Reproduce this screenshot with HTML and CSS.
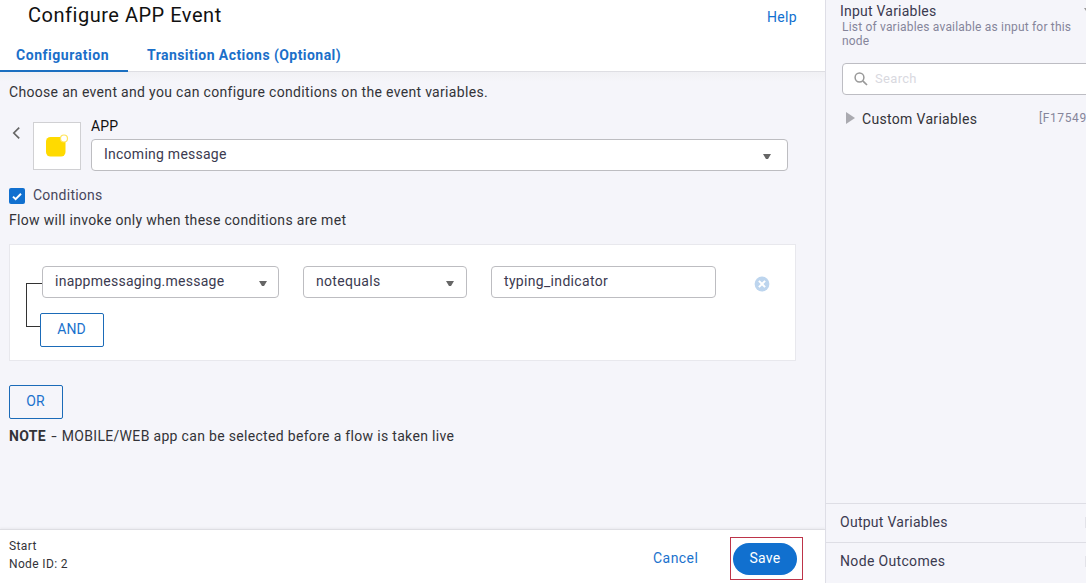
FILE: index.html
```html
<!DOCTYPE html>
<html lang="en">
<head>
<meta charset="utf-8">
<title>Configure APP Event</title>
<link rel="stylesheet" href="styles.css">
</head>
<body>
<div class="layout">
  <main class="main">
    <header class="header">
      <div class="title-row"><h1 class="title">Configure APP Event</h1><a class="help">Help</a></div>
      <nav class="tabs"><a class="tab tab-active">Configuration</a><a class="tab">Transition Actions (Optional)</a></nav>
    </header>
    <section class="content">
      <p class="intro">Choose an event and you can configure conditions on the event variables.</p>
      <div class="event">
        <svg class="back" width="10" height="14" viewBox="0 0 10 14"><path d="M8.2 1.6 2.8 7l5.4 5.4" fill="none" stroke="#666" stroke-width="1.7"/></svg>
        <div class="app-icon"><svg width="46" height="46" viewBox="0 0 46 46"><rect x="12" y="14" width="19.5" height="19.5" rx="4.5" fill="#ffda00"/><circle cx="30" cy="15.5" r="3.5" fill="#fff" stroke="#ffe45a" stroke-width="1.2"/></svg></div>
        <div class="event-field">
          <div class="label">APP</div>
          <div class="control"><span class="incoming">Incoming message</span><svg class="caret" width="8" height="6"><path d="M0 0h8L5 5H3z" fill="#666"/></svg></div>
        </div>
      </div>
      <div class="check-row"><span class="checkbox"><svg width="16" height="16" viewBox="0 0 16 16"><path d="m4 8.6 2.6 2.5L12 5.7" fill="none" stroke="#fff" stroke-width="2"/></svg></span><span class="conditions-label">Conditions</span></div>
      <p class="flow-text">Flow will invoke only when these conditions are met</p>
      <div class="conditions">
        <div class="link-line"></div>
        <div class="rules">
          <div class="rule">
            <div class="control variable"><span class="variable-text">inappmessaging.message</span><svg class="caret" width="8" height="6"><path d="M0 0h8L5 5H3z" fill="#666"/></svg></div>
            <div class="control operator"><span class="operator-text">notequals</span><svg class="caret" width="8" height="6"><path d="M0 0h8L5 5H3z" fill="#666"/></svg></div>
            <div class="control value"><span class="value-text">typing_indicator</span></div>
            <svg class="remove" width="16" height="16" viewBox="0 0 16 16"><circle cx="8" cy="8" r="7.4" fill="#bdd5ee"/><path d="m4.9 4.9 6.2 6.2m0-6.2-6.2 6.2" stroke="#fff" stroke-width="2"/></svg>
          </div>
          <button class="outline and">AND</button>
        </div>
      </div>
      <button class="outline or">OR</button>
      <p class="note"><b>NOTE</b> <span class="dash">-</span> MOBILE/WEB app can be selected before a flow is taken live</p>
    </section>
    <footer class="footer">
      <div class="node-info"><div>Start</div><div>Node ID: 2</div></div>
      <a class="cancel">Cancel</a>
      <div class="save-frame"><button class="save">Save</button></div>
    </footer>
  </main>
  <aside class="side">
    <div class="side-top">
      <h2 class="side-title input-title">Input Variables</h2>
      <p class="side-desc">List of variables available as input for this node</p>
      <div class="search"><svg width="14" height="14" viewBox="0 0 14 14"><circle cx="5.5" cy="5.5" r="4.4" fill="none" stroke="#999" stroke-width="1.5"/><path d="m8.8 8.8 4.2 4.2" stroke="#999" stroke-width="1.7"/></svg><span>Search</span></div>
      <div class="tree"><svg width="9" height="12"><path d="M0 0 9 6 0 12z" fill="#aaaab0"/></svg><span class="custom">Custom Variables</span><span class="id">[F17549</span></div>
    </div>
    <div class="side-row output">Output Variables</div>
    <div class="side-row outcomes">Node Outcomes</div>
    <svg class="edge edge-top" width="2" height="3"><path d="M0 0h2v3z" fill="#999"/></svg><i class="edge edge-output"></i><i class="edge edge-outcomes"></i>
  </aside>
</div>
</body>
</html>
```
FILE: styles.css
```css
* { box-sizing: border-box; }
body { margin: 0; overflow: hidden; font: 14px/20px Roboto, "Liberation Sans", sans-serif; letter-spacing: .32px; color: #333338; background: #f5f5fa; }
h1, h2, p { margin: 0; font-weight: 400; }
button { margin: 0; padding: 0; font: inherit; letter-spacing: inherit; }
svg { display: block; flex: none; }
.layout { display: flex; width: 1086px; height: 583px; overflow: hidden; }
.main { width: 825px; flex: none; display: flex; flex-direction: column; }
.header { height: 72px; background: #fff; border-bottom: 1px solid #dedee3; }
.title-row { display: flex; justify-content: space-between; height: 38px; padding: 0 28px 0 28px; }
.title { font-size: 20px; line-height: 31px; color: #111; letter-spacing: .52px; }
.help { line-height: 34px; color: #1170cf; }
.tabs { display: flex; height: 34px; }
.tab { padding: 0 16px; line-height: 34px; font-weight: 700; color: #1b6fc9; white-space: nowrap; letter-spacing: .44px; }
.tab-active { width: 128px; margin-right: 3px; border-bottom: 2px solid #1b6fc0; letter-spacing: .54px; }
.content { flex: 1; padding: 10px 29px 0 9px; background: linear-gradient(#f0f0f4, #f5f5fa 10px); }
.event { display: flex; height: 69px; margin-top: 4px; }
.back { margin: 20px 12px 0 2px; }
.app-icon { width: 48px; height: 48px; margin-top: 16px; border: 1px solid #d0d0d3; background: #fff; }
.event-field { width: 697px; margin-left: 10px; }
.label { height: 33px; padding-top: 10px; color: #111; letter-spacing: .1px; }
.control { display: flex; justify-content: space-between; height: 32px; padding: 0 16px 0 12px; border: 1px solid #bdbdc1; border-radius: 4px; background: #fff; color: #3b3a50; line-height: 29px; }
.incoming, .variable-text { letter-spacing: .25px; }
.caret { margin-top: 14px; }
.check-row { display: flex; height: 20px; margin-top: 10px; color: #47465c; }
.conditions-label { letter-spacing: .25px; }
.checkbox { width: 16px; height: 16px; margin: 3px 8px 0 0; border-radius: 2px; background: #1170cf; }
.flow-text { margin-top: 5px; }
.conditions { display: flex; width: 787px; height: 117px; margin-top: 14px; padding: 21px 0 0 16px; border: 1px solid #e8e8ed; background: #fff; }
.link-line { width: 16px; height: 44px; margin-top: 17px; border: 1px solid #333; border-right: 0; }
.rule { display: flex; }
.variable { width: 237px; padding-right: 11px; }
.operator { width: 164px; margin-left: 24px; padding-right: 12px; }
.value { width: 225px; margin-left: 24px; }
.remove { margin: 10px 0 0 38px; }
.outline { display: block; height: 34px; border: 1px solid #1b6bb8; border-radius: 2px; background: #fff; color: #1b72cd; line-height: 30px; letter-spacing: .1px; padding: 0 1px 2px 0; }
.and { width: 64px; margin: 15px 0 0 -2px; }
.or { width: 54px; margin-top: 24px; background: transparent; }
.note { margin-top: 7px; }
.dash { display: inline-block; transform: scaleX(1.4); margin: 0 2px; }
.footer { display: flex; height: 54px; border-top: 1px solid #dedee3; background: #fff; box-shadow: 0 -1px 2px #e9e9ee; }
.node-info { width: 644px; padding: 7px 0 0 9px; font-size: 12px; line-height: 18px; letter-spacing: .36px; }
.cancel { width: 86px; padding: 18px 0 0 9px; color: #1b72cd; letter-spacing: .45px; }
.save-frame { width: 73px; height: 43px; margin-top: 7px; padding: 5px 2px; border: 1px solid #bd3449; }
.save { display: block; width: 64px; height: 32px; padding-bottom: 2px; border: 0; border-radius: 16px; background: #1170cf; color: #fff; line-height: 30px; }
.side { position: relative; flex: none; width: 261px; display: flex; flex-direction: column; border-left: 1px solid #dedee6; }
.side-top { flex: 1; }
.side-title { padding: 1px 0 0 14px; font-size: 14px; line-height: 20px; color: #3b3a50; letter-spacing: .22px; }
.side-desc { width: 250px; padding-left: 16px; font-size: 12px; line-height: 14px; color: #85859a; letter-spacing: .19px; margin-top: -1px; }
.search { display: flex; gap: 7px; width: 260px; height: 32px; margin: 15px 0 0 16px; padding: 8px 11px; border: 1px solid #bdbdc3; border-radius: 4px; background: #fff; font-size: 13px; line-height: 14px; color: #d9d9df; }
.tree { display: flex; height: 20px; margin-top: 14px; padding-left: 20px; white-space: nowrap; }
.tree svg { margin: 3px 7px 0 0; }
.custom { width: 177px; flex: none; }
.id { color: #85859a; font-size: 12px; line-height: 18px; letter-spacing: .6px; }
.side-row { height: 39px; padding-left: 14px; border-top: 1px solid #dedee5; line-height: 37px; color: #3b3a50; letter-spacing: .27px; }
.outcomes { height: 41px; letter-spacing: .34px; }
.edge { position: absolute; right: 0; width: 1px; background: #e3e3e9; }
.edge-top { top: 8px; width: 2px; background: none; }
.edge-output { top: 517px; height: 11px; }
.edge-outcomes { top: 556px; height: 11px; }
```
